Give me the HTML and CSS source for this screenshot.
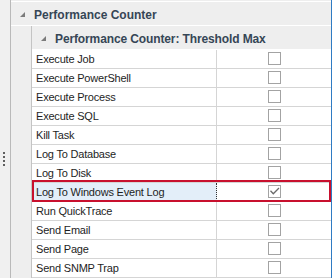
FILE: index.html
```html
<!DOCTYPE html>
<html>
<head>
<meta charset="utf-8">
<link rel="stylesheet" href="styles.css">
</head>
<body>
<div class="page">
  <div class="strip">
    <div class="grip"><i></i><i></i><i></i><i></i></div>
  </div>
  <div class="panel">
    <div class="cat-top"></div>
    <div class="cat-header"><span class="tri"></span><span class="cat-title">Performance Counter</span></div>
    <div class="cat-body">
      <div class="indent"></div>
      <div class="sub">
        <div class="sub-header"><span class="tri"></span><span class="cat-title">Performance Counter: Threshold Max</span></div>
        <div class="row"><div class="name">Execute Job</div><div class="val"><span class="cb"></span></div></div>
        <div class="row"><div class="name">Execute PowerShell</div><div class="val"><span class="cb"></span></div></div>
        <div class="row"><div class="name">Execute Process</div><div class="val"><span class="cb"></span></div></div>
        <div class="row"><div class="name">Execute SQL</div><div class="val"><span class="cb"></span></div></div>
        <div class="row"><div class="name">Kill Task</div><div class="val"><span class="cb"></span></div></div>
        <div class="row"><div class="name">Log To Database</div><div class="val"><span class="cb"></span></div></div>
        <div class="row"><div class="name">Log To Disk</div><div class="val"><span class="cb"></span></div></div>
        <div class="row selected"><div class="name">Log To Windows Event Log</div><div class="val"><span class="cb"><svg class="check" width="11" height="11" viewBox="0 0 11 11"><polyline points="1.5,4.8 4.3,7.8 10,2" fill="none" stroke="#6a6a6a" stroke-width="1.3"/></svg></span></div></div>
        <div class="row"><div class="name">Run QuickTrace</div><div class="val"><span class="cb"></span></div></div>
        <div class="row"><div class="name">Send Email</div><div class="val"><span class="cb"></span></div></div>
        <div class="row"><div class="name">Send Page</div><div class="val"><span class="cb"></span></div></div>
        <div class="row"><div class="name">Send SNMP Trap</div><div class="val"><span class="cb"></span></div></div>
      </div>
    </div>
  </div>
  <div class="highlight"></div>
</div>
</body>
</html>
```

FILE: styles.css
```css
html, body {
  margin: 0;
  padding: 0;
  background: #ffffff;
}
.page {
  position: relative;
  display: flex;
  width: 332px;
  height: 278px;
  overflow: hidden;
  font-family: "Liberation Sans", Arial, sans-serif;
}
.strip {
  width: 10px;
  flex: none;
  background: #f0f0f0;
  border-right: 1px solid #b9b9b9;
}
.grip {
  padding-top: 152px;
  padding-left: 3px;
  display: flex;
  flex-direction: column;
  gap: 2px;
}
.grip i {
  display: block;
  width: 2px;
  height: 2px;
  background: #5f5f5f;
}
.panel {
  flex: 1;
  display: flex;
  flex-direction: column;
  border-right: 1px solid #2f7bc3;
  background: #ffffff;
}
.cat-top {
  height: 1px;
  background: #eeeeee;
  border-bottom: 1px solid #ffffff;
}
.cat-header,
.sub-header {
  height: 23px;
  flex: none;
  display: flex;
  align-items: center;
  background: #eeeeee;
  border-bottom: 1px solid #ffffff;
  font-size: 12px;
  font-weight: bold;
  color: #364656;
}
.cat-header {
  padding-left: 9px;
}
.sub-header {
  padding-left: 9px;
}
.cat-title {
  padding-top: 2px;
  white-space: nowrap;
}
.sub-header .cat-title {
  letter-spacing: -0.12px;
}
.tri {
  width: 0;
  height: 0;
  border-left: 5px solid transparent;
  border-bottom: 5px solid #7b7b7b;
  margin-top: 2px;
  margin-right: 9px;
  flex: none;
}
.cat-body {
  flex: 1;
  display: flex;
}
.indent {
  width: 20px;
  flex: none;
  background: #eeeeee;
  border-right: 1px solid #c4c4c4;
}
.sub {
  flex: 1;
  display: flex;
  flex-direction: column;
}
.row {
  display: flex;
  height: 18px;
  border-bottom: 1px solid #d5d5d5;
  flex: none;
}
.name {
  width: 180px;
  flex: none;
  padding-left: 4px;
  border-right: 1px solid #d5d5d5;
  font-size: 11px;
  line-height: 18px;
  letter-spacing: -0.2px;
  color: #1e1e1e;
  white-space: nowrap;
}
.val {
  flex: 1;
  display: flex;
  justify-content: center;
  padding-top: 2px;
}
.cb {
  display: block;
  width: 11px;
  height: 11px;
  border: 1px solid #a3a3a3;
  background: #ffffff;
  position: relative;
}
.check {
  display: block;
}
.selected .name {
  background: #e3eef9;
  border-right: 1px dotted #333333;
}
.highlight {
  position: absolute;
  left: 32px;
  top: 180px;
  width: 295px;
  height: 18px;
  border: 2px solid #c8102e;
}
```
